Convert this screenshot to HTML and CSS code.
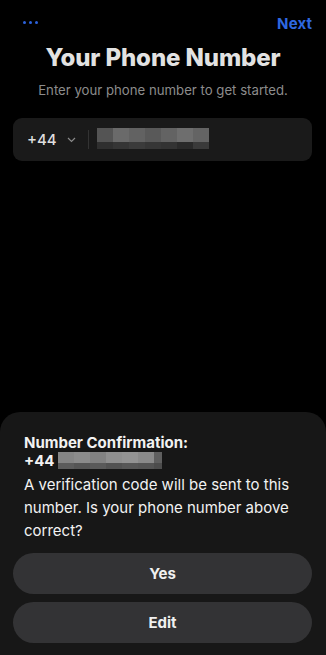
FILE: index.html
```html
<!DOCTYPE html>
<html>
<head>
<meta charset="utf-8">
<link rel="stylesheet" href="styles.css">
</head>
<body>
<div class="screen">
  <div class="topbar">
    <div class="dots"><span></span><span></span><span></span></div>
    <div class="next">Next</div>
  </div>
  <h1 class="title">Your Phone Number</h1>
  <p class="subtitle">Enter your phone number to get started.</p>
  <div class="field">
    <div class="code">+44</div>
    <svg class="chev" width="9" height="6" viewBox="0 0 9 6"><path d="M1 1 L4.5 4.5 L8 1" fill="none" stroke="#8a8a8a" stroke-width="1.2"/></svg>
    <div class="divider"></div>
    <div class="pix pix-field">
      <i style="background:#545454"></i><i style="background:#6a6a6a"></i><i style="background:#626262"></i><i style="background:#595959"></i><i style="background:#636363"></i><i style="background:#6e6e6e"></i><i style="background:#646464"></i>
      <i style="background:#2f2f2f"></i><i style="background:#353535"></i><i style="background:#3b3b3b"></i><i style="background:#363636"></i><i style="background:#333333"></i><i style="background:#2a2a2a"></i><i style="background:#3a3a3a"></i>
    </div>
  </div>
  <div class="spacer"></div>
  <div class="sheet">
    <div class="heading">Number Confirmation:</div>
    <div class="numline">
      <span>+44</span>
      <div class="pix pix-sheet">
        <i style="background:#858585"></i><i style="background:#8b8b8b"></i><i style="background:#828282"></i><i style="background:#8f8f8f"></i><i style="background:#939393"></i><i style="background:#8a8a8a"></i><i style="background:#5f5f5f"></i>
        <i style="background:#5c5c5c"></i><i style="background:#555555"></i><i style="background:#5a5a5a"></i><i style="background:#525252"></i><i style="background:#575757"></i><i style="background:#545454"></i><i style="background:#4c4c4c"></i>
      </div>
    </div>
    <p class="body">A verification code will be sent to this number. Is your phone number above correct?</p>
    <div class="btn btn-yes">Yes</div>
    <div class="btn btn-edit">Edit</div>
  </div>
</div>
</body>
</html>
```
FILE: styles.css
```css
html, body {
  margin: 0;
  padding: 0;
  background: #000;
}
.screen {
  width: 326px;
  height: 655px;
  display: flex;
  flex-direction: column;
  font-family: Inter, "Liberation Sans", sans-serif;
  background: #000;
  overflow: hidden;
}
.topbar {
  display: flex;
  justify-content: space-between;
  align-items: center;
  padding: 13px 14px 0 23px;
  height: 20px;
}
.dots {
  display: flex;
  gap: 3px;
  margin-top: -1px;
}
.dots span {
  width: 3px;
  height: 3px;
  border-radius: 50%;
  background: #2c62db;
}
.next {
  color: #2e68e0;
  font-weight: 700;
  font-size: 15px;
  letter-spacing: 0.1px;
}
.title {
  margin: 10px 0 0;
  text-align: center;
  color: #e2e2e2;
  font-size: 24px;
  font-weight: 800;
  line-height: 29px;
  letter-spacing: -0.1px;
}
.subtitle {
  margin: 9px 0 0;
  text-align: center;
  color: #8c8c8c;
  font-size: 13.2px;
  line-height: 18px;
}
.field {
  margin: 19px 14px 0 13px;
  height: 43px;
  background: #1a1a1a;
  border-radius: 9px;
  display: flex;
  align-items: center;
  padding-left: 14px;
}
.code {
  color: #dedede;
  font-size: 15px;
  font-weight: 500;
}
.chev {
  margin-left: 10px;
  margin-top: 1px;
}
.divider {
  width: 1px;
  height: 19px;
  background: #333;
  margin-left: 12px;
}
.pix {
  display: grid;
}
.pix i {
  display: block;
}
.pix-field {
  margin-left: 8px;
  margin-top: -2px;
  grid-template-columns: repeat(7, 16px);
  grid-template-rows: 14px 7px;
}
.spacer {
  flex: 1;
}
.sheet {
  background: #171717;
  border-radius: 20px 20px 0 0;
  padding: 23px 14px 12px 13px;
  display: flex;
  flex-direction: column;
}
.heading, .numline, .body {
  padding-left: 11px;
  color: #f2f2f2;
  font-size: 15px;
}
.heading {
  font-weight: 700;
  line-height: 16px;
}
.numline {
  display: flex;
  align-items: center;
  gap: 4px;
  font-weight: 700;
  margin-top: 1px;
  height: 17px;
  line-height: 17px;
}
.pix-sheet {
  grid-template-columns: repeat(6, 16px) 8px;
  grid-template-rows: 11px 6px;
}
.body {
  margin: 4px 0 0;
  font-weight: 400;
  line-height: 23px;
  padding-right: 14px;
}
.btn {
  height: 41px;
  border-radius: 21px;
  background: #333335;
  color: #f0f0f0;
  font-weight: 700;
  font-size: 15px;
  display: flex;
  align-items: center;
  justify-content: center;
}
.btn-yes {
  margin-top: 11px;
}
.btn-edit {
  margin-top: 8px;
}
```
